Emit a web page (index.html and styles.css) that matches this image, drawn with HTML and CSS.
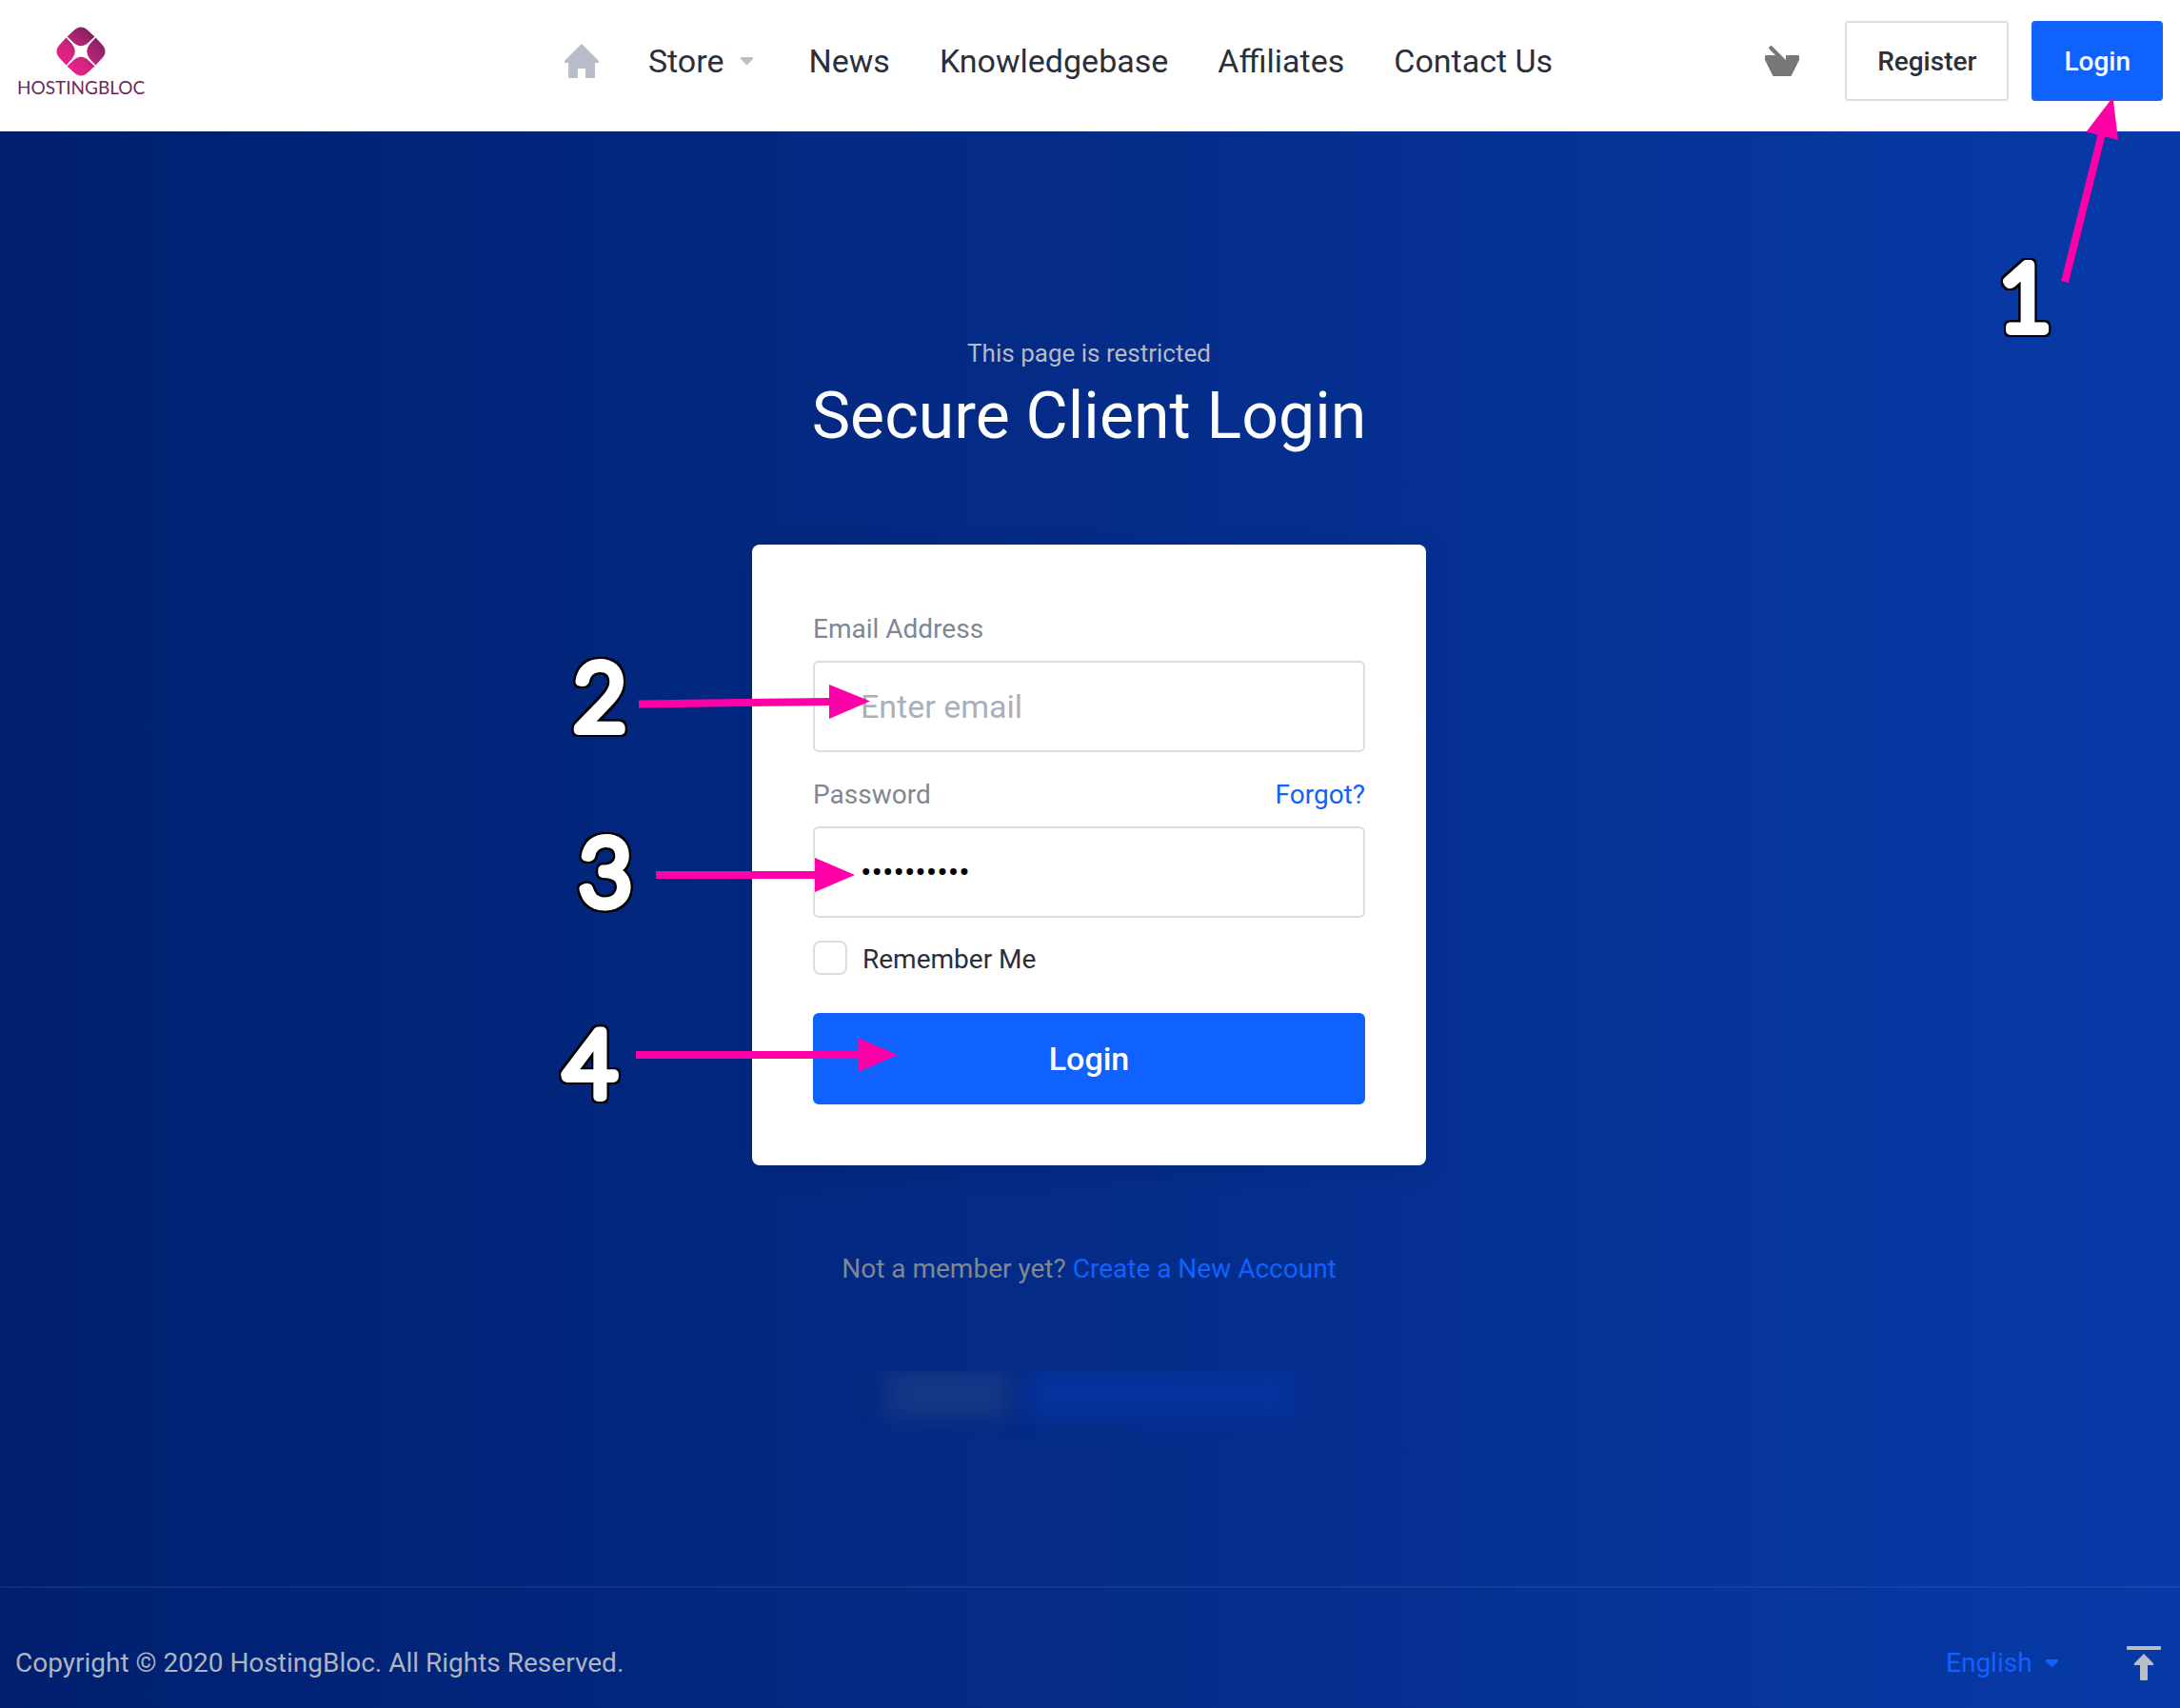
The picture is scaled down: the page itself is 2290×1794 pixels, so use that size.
FILE: index.html
```html
<!DOCTYPE html>
<html lang="en">
<head>
<meta charset="utf-8">
<meta name="viewport" content="width=device-width, initial-scale=1">
<title>Secure Client Login - HostingBloc</title>
<link rel="stylesheet" href="styles.css">
</head>
<body>
<header class="header">
  <a class="logo" href="#">
    <svg class="logo-mark" viewBox="0 0 52 52" aria-hidden="true">
      <defs>
        <linearGradient id="brand" gradientUnits="userSpaceOnUse" x1="10" y1="44" x2="42" y2="8">
          <stop offset="0" stop-color="#e6248c"/>
          <stop offset="0.35" stop-color="#d6227f"/>
          <stop offset="1" stop-color="#78235f"/>
        </linearGradient>
      </defs>
      <g fill="url(#brand)">
        <path d="M11.500 10.500 L18 4.500 Q26 -3.500 34 4.500 L40.500 10.500 L34 16.500 Q26 24 18 16.500 Z"/>
        <path d="M11.500 41.500 L18 47.500 Q26 55.500 34 47.500 L40.500 41.500 L34 35.500 Q26 28 18 35.500 Z"/>
        <path d="M10.500 11.500 L4.500 18 Q-3.500 26 4.500 34 L10.500 40.500 L16.500 34 Q23 26 16.500 18 Z"/>
        <path d="M41.500 11.500 L47.500 18 Q55.500 26 47.500 34 L41.500 40.500 L35.500 34 Q29 26 35.500 18 Z"/>
      </g>
    </svg>
    <span class="logo-text">HOSTINGBLOC</span>
  </a>
  <nav class="nav" aria-label="Main">
    <a class="nav-link" href="#" aria-label="Home">
      <svg class="icon" viewBox="0 0 36 36" aria-hidden="true"><path d="M18 0 L36 18 V20 H32 V35 Q32 36 31 36 H23 Q22 36 22 35 V26 H14 V35 Q14 36 13 36 H5 Q4 36 4 35 V20 H0 V18 Z"/></svg>
    </a>
    <a class="nav-link nav-menu" href="#">Store
      <svg class="caret" viewBox="0 0 13 8" aria-hidden="true"><path d="M1 0 H12 Q13 0 13 1 V2 L7 8 H6 L0 2 V1 Q0 0 1 0 Z"/></svg>
    </a>
    <a class="nav-link" href="#">News</a>
    <a class="nav-link" href="#">Knowledgebase</a>
    <a class="nav-link" href="#">Affiliates</a>
    <a class="nav-link" href="#">Contact Us</a>
  </nav>
  <div class="actions">
    <a class="cart" href="#" aria-label="Shopping cart">
      <svg class="icon" viewBox="0 0 36 36" aria-hidden="true"><path d="M6 2 Q7 2 8 3 L22 17 V12 H35 Q36 12 36 13 V17 L28 33 Q27.500 34 27 34 H9 Q8.500 34 8 33 L0 17 V13 Q0 12 1 12 H11 L5 6 Q4 5 4 4 Z"/></svg>
    </a>
    <button class="button button-outline" type="button">Register</button>
    <button class="button button-primary" type="button">Login</button>
  </div>
  <svg class="arrow arrow-1" viewBox="0 0 64 200" aria-hidden="true"><path class="shaft" d="M8 196 L47 40"/><path class="head" d="M58.500 2 L30.500 38.500 L64 47 Z"/></svg>
  <svg class="step step-1" viewBox="0 0 80 100"><text x="40" y="88">1</text></svg>
</header>

<main class="main">
  <p class="subtitle">This page is restricted</p>
  <h1 class="title">Secure Client Login</h1>
  <form class="card">
    <div class="field">
      <label class="label" for="email">Email Address</label>
      <input class="input" id="email" type="email" placeholder="Enter email">
    </div>
    <div class="field">
      <div class="label-row">
        <label class="label" for="password">Password</label>
        <a class="link" href="#">Forgot?</a>
      </div>
      <input class="input" id="password" type="password" value="clientpass">
    </div>
    <label class="remember"><input class="checkbox" type="checkbox">Remember Me</label>
    <button class="button button-primary button-block" type="submit">Login</button>

    <svg class="step step-2" viewBox="0 0 80 100"><text x="40" y="88">2</text></svg>
    <svg class="arrow arrow-2" viewBox="0 0 243 36" aria-hidden="true"><path class="shaft" d="M0 20.500 L202 18"/><path class="head" d="M200 0 L243 17.500 L200 36 Z"/></svg>
    <svg class="step step-3" viewBox="0 0 80 100"><text x="40" y="88">3</text></svg>
    <svg class="arrow arrow-3" viewBox="0 0 209 36" aria-hidden="true"><path class="shaft" d="M0 18 H168"/><path class="head" d="M167 0 L209 18 L167 36 Z"/></svg>
    <svg class="step step-4" viewBox="0 0 80 100"><text x="40" y="88">4</text></svg>
    <svg class="arrow arrow-4" viewBox="0 0 275 36" aria-hidden="true"><path class="shaft" d="M0 18 H234"/><path class="head" d="M233 0 L275 18 L233 36 Z"/></svg>
  </form>
  <p class="signup">Not a member yet? <a class="link" href="#">Create a New Account</a></p>
  <div class="redacted" aria-hidden="true">
    <span class="smudge smudge-gray"></span>
    <span class="smudge smudge-blue"></span>
  </div>
</main>

<footer class="footer">
  <p class="copyright">Copyright © 2020 HostingBloc. All Rights Reserved.</p>
  <div class="footer-tools">
    <label class="language">
      <select class="language-select" aria-label="Language"><option>English</option></select>
      <svg class="caret" viewBox="0 0 13 8" aria-hidden="true"><path d="M1 0 H12 Q13 0 13 1 V2 L7 8 H6 L0 2 V1 Q0 0 1 0 Z"/></svg>
    </label>
    <a class="to-top" href="#" aria-label="Back to top">
      <svg class="icon" viewBox="0 0 36 36" aria-hidden="true"><path d="M1 0 H35 Q36 0 36 1 V3 Q36 4 35 4 H1 Q0 4 0 3 V1 Q0 0 1 0 Z M18 8 L28 18 V20 H22 V35 Q22 36 21 36 H15 Q14 36 14 35 V20 H8 V18 Z"/></svg>
    </a>
  </div>
</footer>
</body>
</html>
```

FILE: styles.css
```css
* {
  box-sizing: border-box;
}

body {
  margin: 0;
  min-height: 100vh;
  display: flex;
  flex-direction: column;
  background: linear-gradient(90deg, #001f6f 0%, #042c88 50%, #073aa8 100%);
  font-family: Roboto, "Liberation Sans", sans-serif;
  font-size: 28px;
  line-height: 40px;
  color: #2a2f3a;
}

a {
  color: inherit;
  text-decoration: none;
}

p,
h1 {
  margin: 0;
}

svg {
  display: block;
  fill: currentColor;
}

.icon {
  width: 36px;
  height: 36px;
}

.caret {
  width: 13px;
  height: 8px;
}

/* Header */

.header {
  position: relative;
  display: grid;
  grid-template-columns: 1fr auto 1fr;
  align-items: center;
  padding: 22px 18px 32px;
  background: #fff;
}

.logo {
  justify-self: start;
  display: flex;
  flex-direction: column;
  align-items: center;
  gap: 2px;
  padding-top: 2px;
}

.logo-mark {
  width: 52px;
  height: 52px;
}

.logo-text {
  font-family: Lato, sans-serif;
  font-size: 19px;
  line-height: 20px;
  color: #70285c;
}

.nav {
  display: flex;
  align-items: center;
  gap: 52px;
  margin-right: 66px;
  font-size: 34px;
}

.nav-link {
  display: flex;
  align-items: center;
  gap: 18px;
}

.nav-menu {
  padding-right: 6px;
}

.nav-link svg {
  color: #b8bec9;
}

.actions {
  justify-self: end;
  display: flex;
  align-items: center;
  gap: 24px;
}

.cart {
  margin-right: 24px;
  color: #777;
}

.button {
  height: 84px;
  padding: 2px 32px 0;
  border: 2px solid #dcdde2;
  border-radius: 4px;
  background: #fff;
  color: #2a2f3a;
  font: 500 28px/40px Roboto, "Liberation Sans", sans-serif;
}

.button-primary {
  border-color: #0f62fe;
  background: #0f62fe;
  color: #fff;
}

/* Login */

.main {
  flex: 1;
  display: flex;
  flex-direction: column;
  align-items: center;
  padding: 213px 34px 64px 32px;
}

.subtitle {
  font-size: 26px;
  color: #b5bac4;
}

.title {
  margin: 6px 0 95px;
  font-size: 68px;
  font-weight: 400;
  line-height: 80px;
  color: #fff;
}

.card {
  position: relative;
  width: 100%;
  max-width: 708px;
  display: flex;
  flex-direction: column;
  padding: 64px;
  border-radius: 8px;
  background: #fff;
  box-shadow: 0 4px 24px rgba(0, 20, 80, 0.2);
}

.field {
  display: flex;
  flex-direction: column;
  gap: 8px;
  margin-bottom: 20px;
}

.label-row {
  display: flex;
  justify-content: space-between;
}

.label,
.label-row .link {
  line-height: 50px;
}

.label {
  color: #808792;
}

.link {
  color: #0f62fe;
}

.input {
  width: 100%;
  height: 96px;
  padding: 0 48px;
  border: 2px solid #dcdde2;
  border-radius: 6px;
  background: #fff;
  color: #000;
  font: 34px/40px Roboto, "Liberation Sans", sans-serif;
}

.input::placeholder {
  color: #aab0bb;
  opacity: 1;
}

.remember {
  display: flex;
  align-items: flex-start;
  gap: 16px;
  margin: 4px 0 36px;
}

.checkbox {
  appearance: none;
  width: 36px;
  height: 36px;
  margin: 0;
  border: 2px solid #dcdde2;
  border-radius: 8px;
  background: #fff;
}

.button-block {
  height: 96px;
  padding-top: 0;
  border-radius: 6px;
  font-size: 34px;
}

.signup {
  margin: 89px 0 87px;
  color: #808792;
}

/* Obscured row under the sign-up link */

.redacted {
  display: flex;
  gap: 20px;
  width: 490px;
  max-width: 100%;
  height: 70px;
  padding: 0 30px 22px 32px;
  overflow: hidden;
}

.smudge {
  flex: 1;
  filter: blur(12px);
}

.smudge-gray {
  flex: 0 0 130px;
  background: #163784;
}

.smudge-blue {
  background: #05339f;
}

/* Footer */

.footer {
  display: flex;
  justify-content: space-between;
  padding: 58px 20px 26px 16px;
  border-top: 2px solid rgba(255, 255, 255, 0.06);
  line-height: 42px;
  color: #aeb4c0;
}

.footer-tools {
  display: flex;
  align-items: center;
  gap: 72px;
}

.language {
  display: flex;
  align-items: center;
  gap: 14px;
  color: #0f62fe;
}

.language-select {
  appearance: none;
  padding: 0;
  border: 0;
  background: none;
  color: inherit;
  font: inherit;
}

.to-top {
  color: #b8bec9;
}

/* Walkthrough steps */

.step,
.arrow {
  position: absolute;
}

.arrow {
  height: 36px;
  overflow: visible;
}

.shaft {
  stroke: #ff00a8;
  stroke-width: 8;
}

.head {
  fill: #ff00a8;
}

.step {
  width: 80px;
  height: 100px;
  overflow: visible;
  font-family: Lato, sans-serif;
  font-size: 96px;
  font-weight: 300;
  text-anchor: middle;
  fill: #fff;
  stroke: #fff;
  stroke-width: 10;
  stroke-linejoin: round;
  filter: drop-shadow(2px 0 0 #000) drop-shadow(-2px 0 0 #000) drop-shadow(0 2px 0 #000) drop-shadow(0 -2px 0 #000);
}

.step-1 {
  top: 259px;
  right: 123px;
}

.arrow-1 {
  top: 100px;
  right: 65px;
  width: 64px;
  height: 200px;
}

.step-2 {
  top: 107px;
  left: -200px;
}

.arrow-2 {
  top: 147px;
  left: -119px;
  width: 243px;
}

.step-3 {
  top: 291px;
  left: -194px;
}

.arrow-3 {
  top: 329px;
  left: -101px;
  width: 209px;
}

.step-4 {
  top: 492px;
  left: -210px;
}

.arrow-4 {
  top: 518px;
  left: -122px;
  width: 275px;
}
```
